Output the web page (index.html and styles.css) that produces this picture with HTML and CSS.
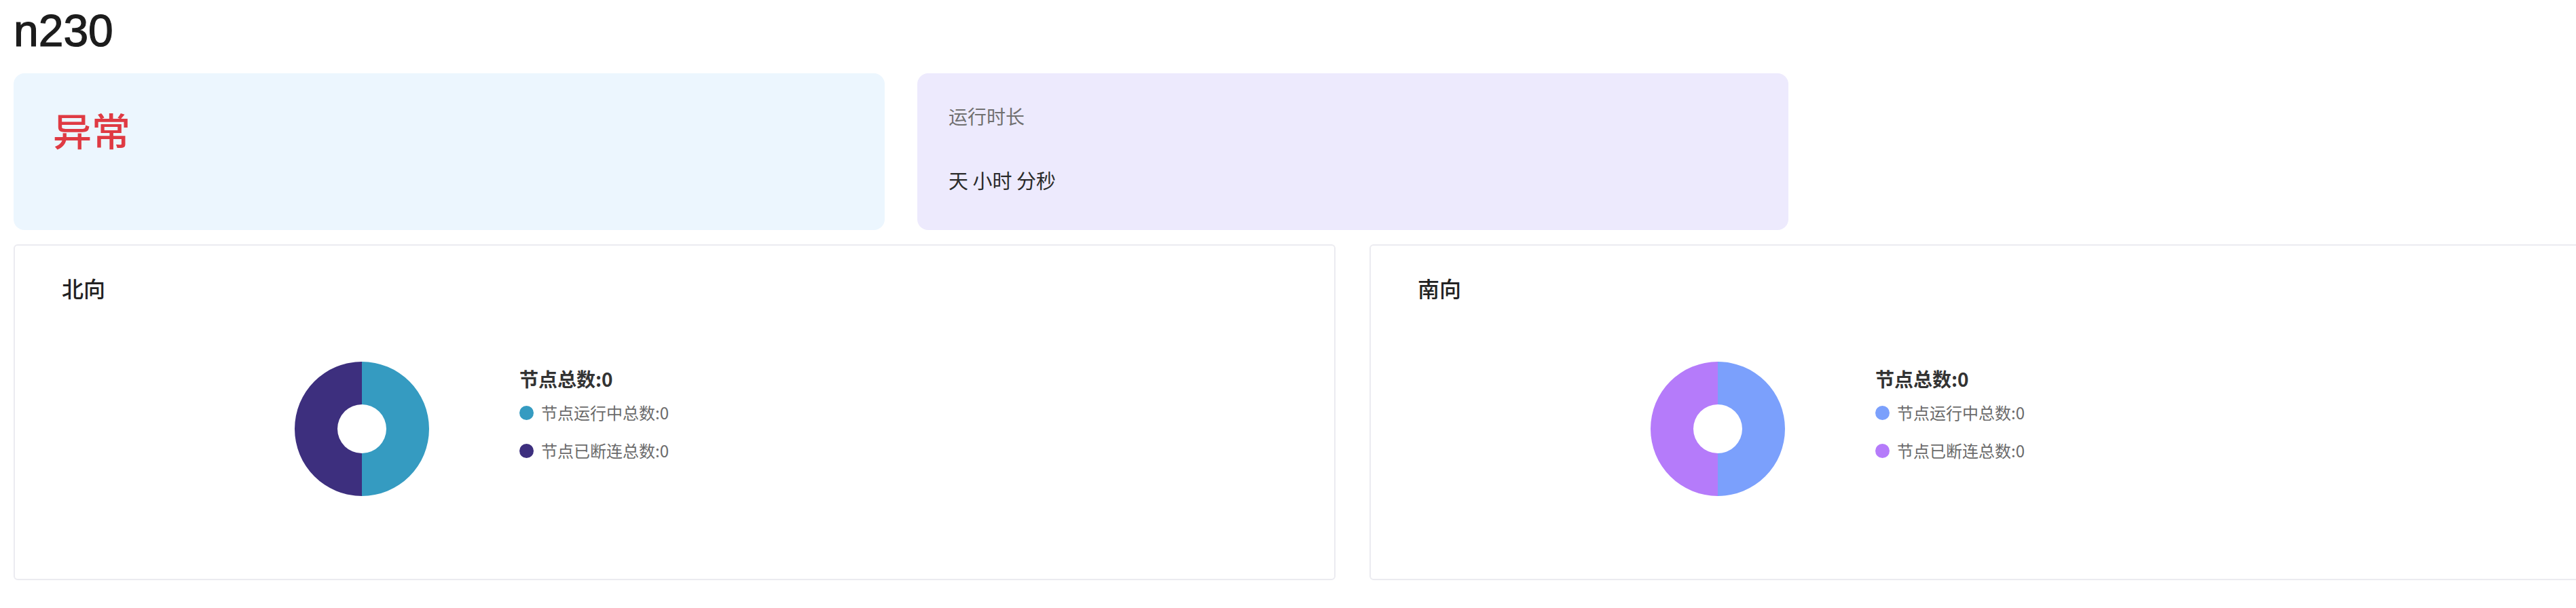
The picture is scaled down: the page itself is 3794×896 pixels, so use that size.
FILE: index.html
```html
<!DOCTYPE html>
<html lang="zh-CN">
<head>
<meta charset="utf-8">
<title>n230</title>
<link rel="stylesheet" href="styles.css">
</head>
<body>
<div class="page">
  <h1 class="title">n230</h1>
  <div class="stats">
    <div class="stat stat-status">
      <div class="status-text">异常</div>
    </div>
    <div class="stat stat-uptime">
      <div class="uptime-label">运行时长</div>
      <div class="uptime-value">天 小时 分秒</div>
    </div>
  </div>
  <div class="panels">
    <section class="panel">
      <h2 class="panel-title">北向</h2>
      <div class="chart">
        <svg class="donut" width="198" height="198" viewBox="0 0 198 198">
          <path d="M99 0 A99 99 0 0 1 99 198 L99 135 A36 36 0 0 0 99 63 Z" fill="#359bc1"/>
          <path d="M99 0 A99 99 0 0 0 99 198 L99 135 A36 36 0 0 1 99 63 Z" fill="#3d2f7e"/>
        </svg>
        <div class="legend">
          <div class="legend-total">节点总数:0</div>
          <div class="legend-item"><span class="dot dot-north-run"></span>节点运行中总数:0</div>
          <div class="legend-item"><span class="dot dot-north-off"></span>节点已断连总数:0</div>
        </div>
      </div>
    </section>
    <section class="panel">
      <h2 class="panel-title">南向</h2>
      <div class="chart">
        <svg class="donut" width="198" height="198" viewBox="0 0 198 198">
          <path d="M99 0 A99 99 0 0 1 99 198 L99 135 A36 36 0 0 0 99 63 Z" fill="#7ba0fc"/>
          <path d="M99 0 A99 99 0 0 0 99 198 L99 135 A36 36 0 0 1 99 63 Z" fill="#b57bfa"/>
        </svg>
        <div class="legend">
          <div class="legend-total">节点总数:0</div>
          <div class="legend-item"><span class="dot dot-south-run"></span>节点运行中总数:0</div>
          <div class="legend-item"><span class="dot dot-south-off"></span>节点已断连总数:0</div>
        </div>
      </div>
    </section>
  </div>
</div>
</body>
</html>
```

FILE: styles.css
```css
* { box-sizing: border-box; }
html, body {
  margin: 0;
  padding: 0;
  background: #ffffff;
}
body {
  font-family: "Noto Sans CJK SC", "Noto Sans", sans-serif;
  color: #333333;
}
.page {
  width: 3985px;
  padding: 5px 20px 0 20px;
}
.title {
  margin: 0;
  font-family: "Liberation Sans", Arial, sans-serif;
  font-size: 66px;
  font-weight: 400;
  line-height: 80px;
  color: #1c1c1c;
  -webkit-text-stroke: 1.2px #1c1c1c;
}
.stats {
  display: grid;
  grid-template-columns: repeat(3, 1283px);
  column-gap: 48px;
  margin-top: 23px;
}
.stat {
  height: 231px;
  border-radius: 16px;
}
.stat-status {
  background: #ecf6fe;
  padding: 42px 0 0 58px;
}
.status-text {
  font-size: 57px;
  font-weight: 500;
  line-height: 80px;
  color: #df3a43;
}
.stat-uptime {
  background: #edeafd;
  padding: 43px 0 0 46px;
}
.uptime-label {
  font-size: 28px;
  line-height: 40px;
  color: #707070;
}
.uptime-value {
  margin-top: 54px;
  font-size: 29px;
  line-height: 40px;
  color: #2a2a2a;
}
.panels {
  display: grid;
  grid-template-columns: repeat(2, 1947px);
  column-gap: 50px;
  margin-top: 21px;
}
.panel {
  height: 495px;
  border: 2px solid #ebebf0;
  border-radius: 6px;
  padding: 38px 0 0 69px;
}
.panel-title {
  margin: 0;
  font-size: 32px;
  font-weight: 500;
  line-height: 48px;
  color: #222222;
}
.chart {
  display: flex;
  align-items: flex-start;
  margin-top: 85px;
  padding-left: 343px;
}
.donut {
  display: block;
  flex: none;
}
.legend {
  margin-left: 133px;
  margin-top: 5px;
}
.legend-total {
  font-size: 28px;
  font-weight: 600;
  line-height: 40px;
  color: #333333;
}
.legend-item {
  display: flex;
  align-items: center;
  margin-top: 12px;
  font-size: 24px;
  line-height: 36px;
  color: #6b6b6b;
}
.legend-item + .legend-item {
  margin-top: 20px;
}
.dot {
  width: 21px;
  height: 21px;
  border-radius: 50%;
  margin-right: 11px;
  flex: none;
}
.dot-north-run { background: #359bc1; }
.dot-north-off { background: #3d2f7e; }
.dot-south-run { background: #7ba0fc; }
.dot-south-off { background: #b57bfa; }
```
